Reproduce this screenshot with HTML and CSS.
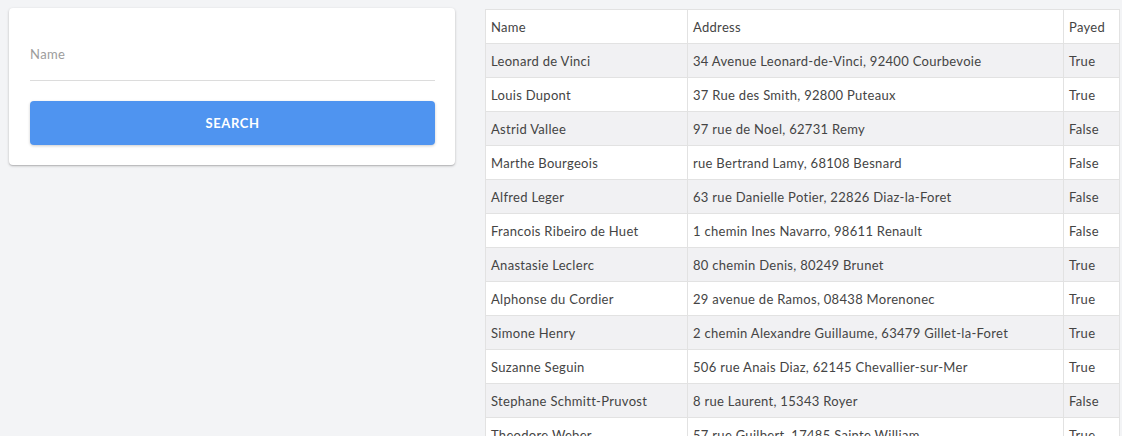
FILE: index.html
```html
<!DOCTYPE html>
<html lang="en">
<head>
<meta charset="utf-8">
<title>Customers</title>
<link rel="stylesheet" href="styles.css">
</head>
<body>
<div class="page">
  <section class="card">
    <div class="field">
      <label class="field-label">Name</label>
    </div>
    <button class="btn">Search</button>
  </section>
  <section class="table-wrap">
    <table class="grid">
      <colgroup>
        <col class="c-name">
        <col class="c-addr">
        <col class="c-pay">
      </colgroup>
      <thead>
        <tr><th>Name</th><th>Address</th><th>Payed</th></tr>
      </thead>
      <tbody>
        <tr><td>Leonard de Vinci</td><td>34 Avenue Leonard-de-Vinci, 92400 Courbevoie</td><td>True</td></tr>
        <tr><td>Louis Dupont</td><td>37 Rue des Smith, 92800 Puteaux</td><td>True</td></tr>
        <tr><td>Astrid Vallee</td><td>97 rue de Noel, 62731 Remy</td><td>False</td></tr>
        <tr><td>Marthe Bourgeois</td><td>rue Bertrand Lamy, 68108 Besnard</td><td>False</td></tr>
        <tr><td>Alfred Leger</td><td>63 rue Danielle Potier, 22826 Diaz-la-Foret</td><td>False</td></tr>
        <tr><td>Francois Ribeiro de Huet</td><td>1 chemin Ines Navarro, 98611 Renault</td><td>False</td></tr>
        <tr><td>Anastasie Leclerc</td><td>80 chemin Denis, 80249 Brunet</td><td>True</td></tr>
        <tr><td>Alphonse du Cordier</td><td>29 avenue de Ramos, 08438 Morenonec</td><td>True</td></tr>
        <tr><td>Simone Henry</td><td>2 chemin Alexandre Guillaume, 63479 Gillet-la-Foret</td><td>True</td></tr>
        <tr><td>Suzanne Seguin</td><td>506 rue Anais Diaz, 62145 Chevallier-sur-Mer</td><td>True</td></tr>
        <tr><td>Stephane Schmitt-Pruvost</td><td>8 rue Laurent, 15343 Royer</td><td>False</td></tr>
        <tr><td>Theodore Weber</td><td>57 rue Guilbert, 17485 Sainte William</td><td>True</td></tr>
      </tbody>
    </table>
  </section>
</div>
</body>
</html>
```

FILE: styles.css
```css
html, body {
  margin: 0;
  padding: 0;
  background: #f3f4f6;
  font-family: "Lato", "Noto Sans", sans-serif;
  color: #444;
  height: 100%;
  overflow: hidden;
}

.page {
  display: flex;
  align-items: flex-start;
  gap: 30px;
  padding: 8px 3px 0 9px;
}

.card {
  flex: 0 0 446px;
  box-sizing: border-box;
  background: #fff;
  border-radius: 4px;
  box-shadow: 0 1px 3px rgba(0,0,0,0.2), 0 1px 1px rgba(0,0,0,0.12);
  padding: 21px 20px 20px 21px;
  display: flex;
  flex-direction: column;
}

.field {
  height: 52px;
  border-bottom: 1px solid #dcdcdc;
  box-sizing: border-box;
  display: flex;
  align-items: flex-start;
  padding-top: 17px;
}

.field-label {
  font-size: 13px;
  color: #9c9c9c;
  letter-spacing: 0.4px;
}

.btn {
  margin-top: 20px;
  height: 44px;
  border: none;
  border-radius: 4px;
  background: #4f94f0;
  color: #fff;
  font-family: inherit;
  font-size: 13px;
  font-weight: 700;
  letter-spacing: 0.6px;
  text-transform: uppercase;
  box-shadow: 0 1px 3px rgba(0,0,0,0.2);
  padding: 0;
}

.table-wrap {
  flex: 1;
  margin-top: 1px;
}

.grid {
  width: 100%;
  border-collapse: collapse;
  table-layout: fixed;
  font-size: 13px;
  background: #fff;
}

.c-name { width: 202px; }
.c-addr { width: 376px; }
.c-pay { width: 56px; }

.grid th,
.grid td {
  border: 1px solid #e2e2e2;
  height: 34px;
  padding: 1px 5px 0;
  text-align: left;
  font-weight: 400;
  letter-spacing: 0.3px;
  white-space: nowrap;
  overflow: hidden;
  box-sizing: border-box;
}

.grid tbody tr:nth-child(odd) td {
  background: #f1f1f3;
}
```
